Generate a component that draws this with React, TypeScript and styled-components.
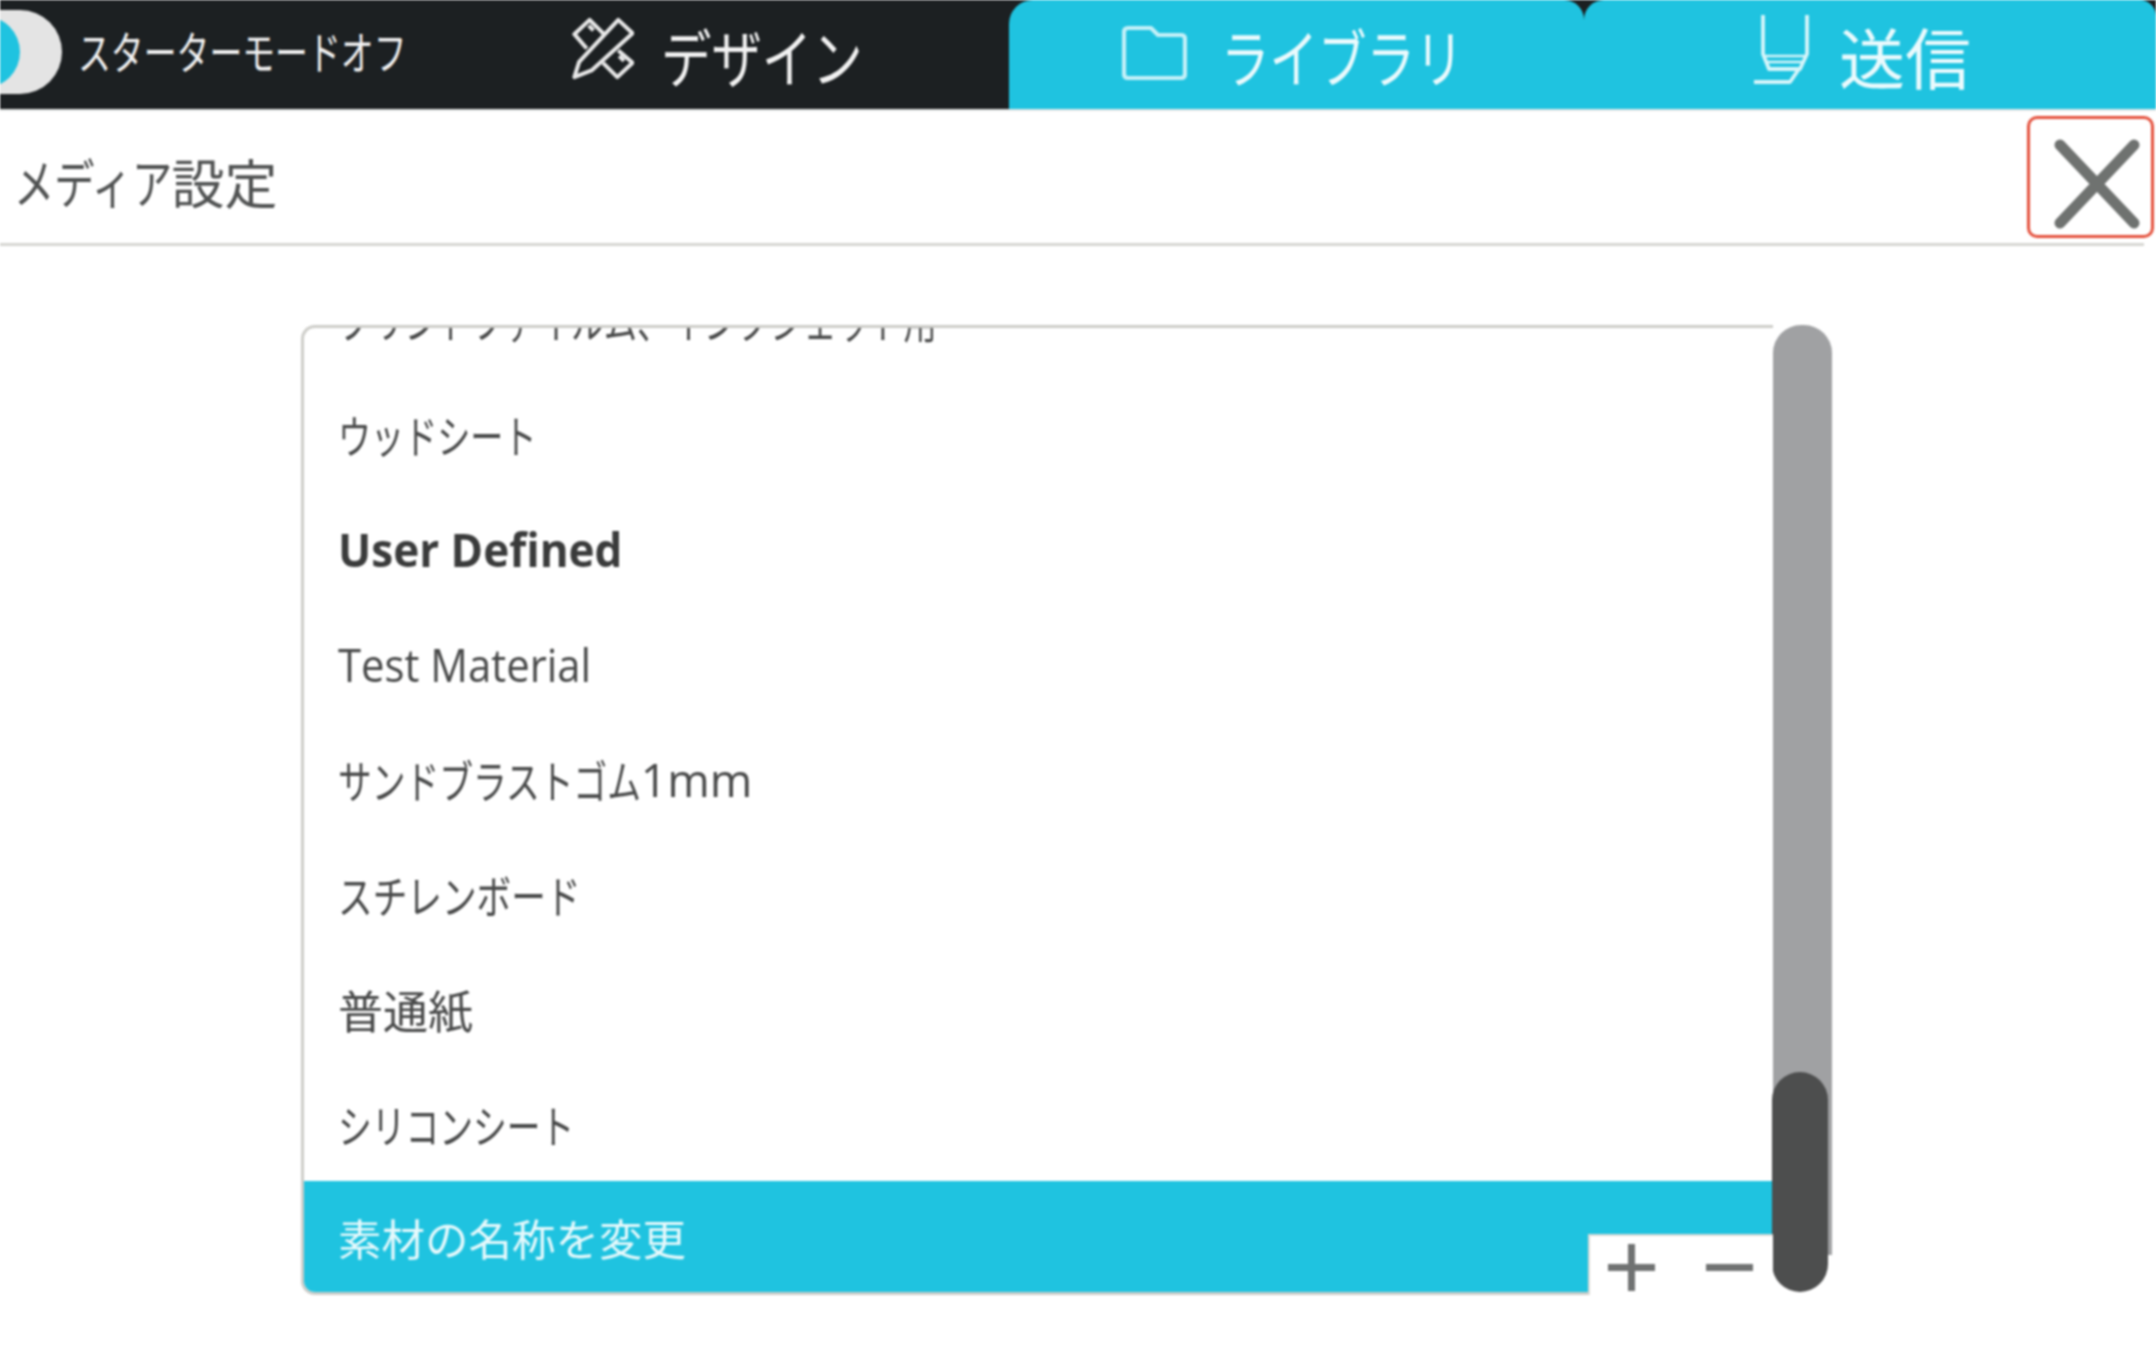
import React from 'react'
import styled, { createGlobalStyle } from 'styled-components'

const CJK = '"Noto Sans CJK JP", "Noto Sans", sans-serif'
const LATIN = '"Open Sans", "Noto Sans CJK JP", sans-serif'
const CYAN = '#1fc3e0'

const GlobalStyle = createGlobalStyle`
  html, body {
    margin: 0;
    padding: 0;
    background: #fff;
    overflow: hidden;
  }
  #root {
    width: 2156px;
    height: 1366px;
    overflow: hidden;
    filter: blur(0.9px);
  }
`

const Narrow = styled.span<{ $s: number; $n: number }>`
  display: inline-block;
  white-space: nowrap;
  transform-origin: left center;
  transform: scaleX(${({ $s }) => $s});
  margin-right: ${({ $s, $n }) => -(1 - $s) * $n}em;
`

const Header = styled.header`
  display: flex;
  height: 109px;
  background: #1c2022;
  border-bottom: 2px solid #e4e6e6;
  font-family: ${CJK};
  color: #f2f2f2;
  overflow: hidden;
`

const ToggleGroup = styled.div`
  display: flex;
  align-items: center;
  width: 572px;
  height: 104px;
`

const TogglePill = styled.div`
  display: flex;
  align-items: center;
  width: 62px;
  height: 84px;
  background: #e4e4e4;
  border-radius: 0 42px 42px 0;
  overflow: hidden;
`

const ToggleKnob = styled.div`
  flex: none;
  width: 72px;
  height: 72px;
  margin-left: -52px;
  border-radius: 50%;
  background: ${CYAN};
`

const ToggleLabel = styled.span`
  margin-left: 16px;
  padding-bottom: 4px;
  font-size: 45px;
  line-height: 1;
`

const NavItem = styled.div`
  display: flex;
  align-items: center;
  gap: 27px;
  width: 437px;
  font-size: 63px;
  line-height: 1;
`

const Tab = styled.div<{ $width: number; $pad: number; $gap: number; $radius: string; $size: number }>`
  display: flex;
  align-items: center;
  gap: ${({ $gap }) => $gap}px;
  width: ${({ $width }) => $width}px;
  padding-left: ${({ $pad }) => $pad}px;
  box-sizing: border-box;
  background: ${CYAN};
  border-radius: ${({ $radius }) => $radius};
  color: #eafafd;
  font-size: ${({ $size }) => $size}px;
  line-height: 1;
`

const IconLift = styled.span<{ $lift: number }>`
  display: flex;
  flex: none;
  margin-bottom: ${({ $lift }) => $lift}px;
`

const TitleRow = styled.div`
  display: flex;
  align-items: center;
  justify-content: space-between;
  width: 2144px;
  height: 135px;
  box-sizing: border-box;
  padding-left: 14px;
  border-bottom: 3px solid #d6d6d2;
`

const Title = styled.h1`
  margin: 8px 0 0;
  font-family: ${CJK};
  font-size: 53px;
  font-weight: 400;
  line-height: 1;
  color: #505252;
`

const CloseButton = styled.button`
  display: flex;
  align-items: center;
  flex: none;
  width: 127px;
  height: 122px;
  margin-right: -10px;
  padding: 14px 0 0 23px;
  box-sizing: border-box;
  background: #fff;
  border: 3px solid #e4503c;
  border-radius: 10px;
`

const Panel = styled.section`
  position: relative;
  display: flex;
  width: 1531px;
  height: 970px;
  margin: 79px 0 0 301px;
`

const ListBox = styled.div`
  flex: 1;
  display: flex;
  flex-direction: column;
  justify-content: flex-end;
  overflow: hidden;
  border: 3px solid #cdcdc9;
  border-right: 0;
  border-radius: 14px 0 0 14px;
  font-family: ${CJK};
  font-size: 45px;
  color: #484949;
`

const Row = styled.div<{ $selected?: boolean }>`
  flex: none;
  display: flex;
  align-items: center;
  height: ${({ $selected }) => ($selected ? 111 : 115)}px;
  box-sizing: border-box;
  padding: ${({ $selected }) => ($selected ? 3 : 1)}px 0 0 34px;
  line-height: 1;
  white-space: nowrap;
  background: ${({ $selected }) => ($selected ? CYAN : 'transparent')};
  color: ${({ $selected }) => ($selected ? '#e6f9fc' : 'inherit')};
  font-size: ${({ $selected }) => ($selected ? 43.5 : 45)}px;
`

const GroupRow = styled(Row)`
  padding-top: 0;
  font-family: ${LATIN};
  font-size: 46px;
  font-weight: 700;
  color: #3a3b3b;
`

const LatinRow = styled(Row)`
  font-family: ${LATIN};
  font-size: 46px;
`

const Latin = styled.span`
  font-family: ${LATIN};
  font-size: 46px;
`

const Track = styled.div`
  flex: none;
  display: flex;
  flex-direction: column;
  justify-content: flex-end;
  width: 59px;
  padding-bottom: 3px;
  box-sizing: border-box;
  background: linear-gradient(#a0a1a3 calc(100% - 40px), #fff calc(100% - 40px));
  border-radius: 28px 28px 0 0;
`

const Thumb = styled.div`
  width: 56px;
  height: 220px;
  margin-left: -1px;
  background: #4d4e4e;
  border-radius: 28px;
`

const StepperBox = styled.div`
  position: absolute;
  right: 59px;
  bottom: 0;
  display: flex;
  align-items: center;
  gap: 51px;
  width: 185px;
  height: 61px;
  box-sizing: border-box;
  padding: 4px 0 0 18px;
  background: #fff;
  border-top: 2px solid #dadad6;
  border-left: 2px solid #dadad6;
`

const DesignIcon = () => (
  <svg width="62" height="63" viewBox="0 0 64 66" fill="none" stroke="#e8e8e8" strokeWidth="4.2" strokeLinejoin="round">
    <path d="M2 63 L7 47 L48 3 L63 17 L20 56 Z" />
    <path d="M33 18 L18 3 L2 18 L15 33" />
    <path d="M48 35 L63 48 L47 63 L32 48" />
    <path d="M17 9 L22 14 M49 41 L54 46" />
  </svg>
)

const FolderIcon = () => (
  <svg width="65" height="55" viewBox="0 0 65 55" fill="none" stroke="#c4f0f8" strokeWidth="4.2" strokeLinejoin="round">
    <path d="M6 3 H29 L36 10 H59 Q63 10 63 14 V49 Q63 53 59 53 H6 Q2 53 2 49 V7 Q2 3 6 3 Z" />
  </svg>
)

const SendIcon = () => (
  <svg width="56" height="70" viewBox="0 0 56 70" fill="none" stroke="#d6f5fa" strokeWidth="3.8" strokeLinejoin="round">
    <path d="M10 1 V40 L16 55 H47 L54 40 V1" />
    <path d="M10 42 H54 M13 48 H50" strokeWidth="2.6" />
    <path d="M46 55 L37 68 H1" />
  </svg>
)

const CloseIcon = () => (
  <svg width="88" height="92" viewBox="0 0 88 92" fill="none" stroke="#6f7270" strokeWidth="11" strokeLinecap="round">
    <path d="M7 7 L81 85 M81 7 L7 85" />
  </svg>
)

const PlusIcon = () => (
  <svg width="47" height="47" viewBox="0 0 47 47" stroke="#707272" strokeWidth="7">
    <path d="M0 23.5 H47 M23.5 0 V47" />
  </svg>
)

const MinusIcon = () => (
  <svg width="47" height="47" viewBox="0 0 47 47" stroke="#707272" strokeWidth="7">
    <path d="M0 23.5 H47" />
  </svg>
)

const App: React.FC = () => (
  <>
    <GlobalStyle />
    <Header>
      <ToggleGroup>
        <TogglePill>
          <ToggleKnob />
        </TogglePill>
        <ToggleLabel>
          <Narrow $s={0.73} $n={10}>スターターモードオフ</Narrow>
        </ToggleLabel>
      </ToggleGroup>
      <NavItem>
        <IconLift $lift={12}>
          <DesignIcon />
        </IconLift>
        <Narrow $s={0.8} $n={4}>デザイン</Narrow>
      </NavItem>
      <Tab $width={575} $pad={113} $gap={34} $radius="24px 20px 0 0" $size={63}>
        <IconLift $lift={4}>
          <FolderIcon />
        </IconLift>
        <Narrow $s={0.77} $n={5}>ライブラリ</Narrow>
      </Tab>
      <Tab $width={572} $pad={169} $gap={30} $radius="20px 16px 0 0" $size={66}>
        <IconLift $lift={12}>
          <SendIcon />
        </IconLift>
        <span>送信</span>
      </Tab>
    </Header>
    <TitleRow>
      <Title>
        <Narrow $s={0.76} $n={4}>メディア</Narrow>設定
      </Title>
      <CloseButton aria-label="閉じる">
        <CloseIcon />
      </CloseButton>
    </TitleRow>
    <Panel>
      <ListBox>
        <Row>
          <Narrow $s={0.74} $n={18}>プリントファイルム、インクジェット用</Narrow>
        </Row>
        <Row>
          <Narrow $s={0.735} $n={6}>ウッドシート</Narrow>
        </Row>
        <GroupRow>
          <Narrow $s={0.957} $n={0}>User Defined</Narrow>
        </GroupRow>
        <LatinRow>
          <Narrow $s={0.91} $n={0}>Test Material</Narrow>
        </LatinRow>
        <Row>
          <Narrow $s={0.75} $n={9}>サンドブラストゴム</Narrow>
          <Latin>1mm</Latin>
        </Row>
        <Row>
          <Narrow $s={0.77} $n={7}>スチレンボード</Narrow>
        </Row>
        <Row>普通紙</Row>
        <Row>
          <Narrow $s={0.75} $n={7}>シリコンシート</Narrow>
        </Row>
        <Row $selected>素材の名称を変更</Row>
      </ListBox>
      <Track>
        <Thumb />
      </Track>
      <StepperBox>
        <PlusIcon />
        <MinusIcon />
      </StepperBox>
    </Panel>
  </>
)

export default App
